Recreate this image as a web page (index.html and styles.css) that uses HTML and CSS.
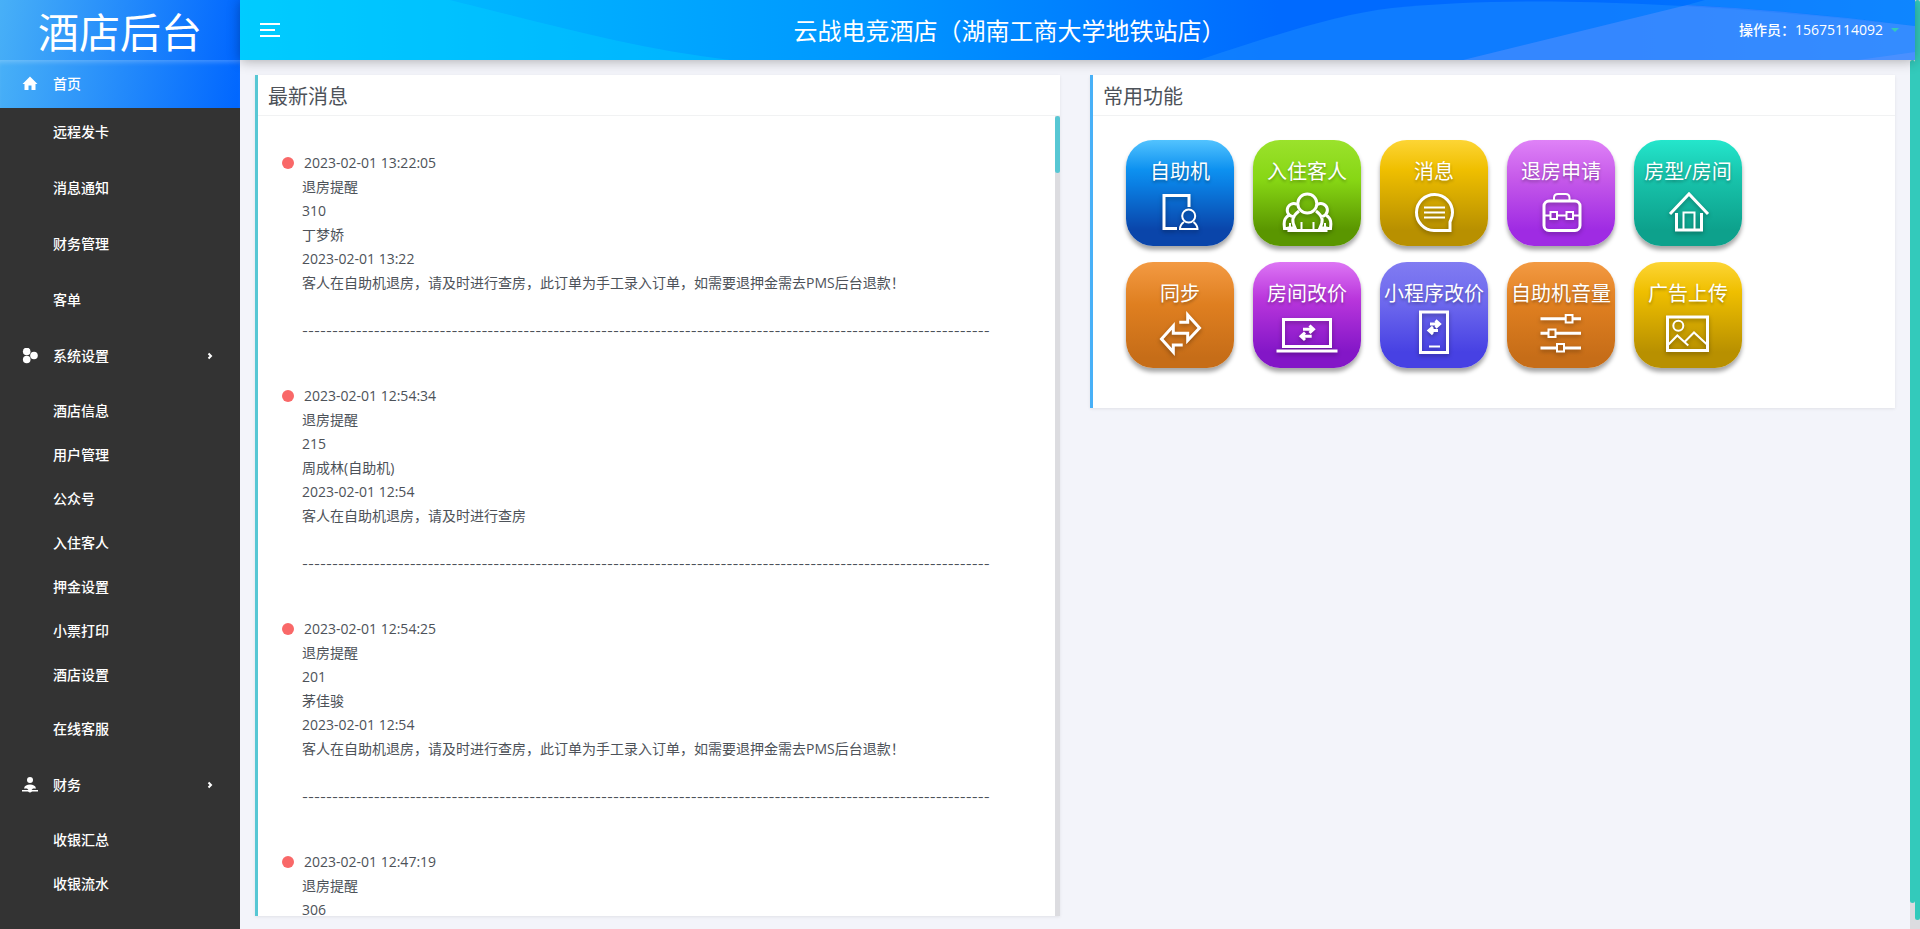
FILE: index.html
```html
<!DOCTYPE html>
<html lang="zh-CN">
<head>
<meta charset="utf-8">
<title>酒店后台</title>
<link rel="stylesheet" href="styles.css">
</head>
<body>
<div class="app">
  <aside class="sidebar">
    <div class="logo">酒店后台</div>
    <nav>
      <ul class="menu">
        <li class="home"><a href="#"><svg class="menu-icon" viewBox="0 0 16 16"><path d="M8 0.500L0.500 8H2.500V14H6.500V9.500H9.500V14H13.500V8H15.500Z"/></svg>首页</a></li>
        <li><a href="#">远程发卡</a></li>
        <li><a href="#">消息通知</a></li>
        <li><a href="#">财务管理</a></li>
        <li><a href="#">客单</a></li>
        <li><a href="#"><svg class="menu-icon" viewBox="0 0 16 16"><circle cx="4.700" cy="3.500" r="3.800"/><circle cx="4.700" cy="11.500" r="3.800"/><circle cx="12" cy="7.500" r="3.800"/></svg>系统设置<svg class="chevron" viewBox="0 0 6 8"><path d="M1.500 1.500L4 4L1.500 6.500"/></svg></a>
          <ul class="submenu">
            <li><a href="#">酒店信息</a></li>
            <li><a href="#">用户管理</a></li>
            <li><a href="#">公众号</a></li>
            <li><a href="#">入住客人</a></li>
            <li><a href="#">押金设置</a></li>
            <li><a href="#">小票打印</a></li>
            <li><a href="#">酒店设置</a></li>
          </ul>
        </li>
        <li><a href="#">在线客服</a></li>
        <li><a href="#"><svg class="menu-icon" viewBox="0 0 16 16"><circle cx="8" cy="3" r="3"/><path d="M2 11.500C2.500 8.500 5 7.500 8 7.500S13.500 8.500 14 11.500H11L9.500 13H16V14.500H10Q8 16.500 6 14.500H0V13H6.500L5 11.500Z"/></svg>财务<svg class="chevron" viewBox="0 0 6 8"><path d="M1.500 1.500L4 4L1.500 6.500"/></svg></a>
          <ul class="submenu">
            <li><a href="#">收银汇总</a></li>
            <li><a href="#">收银流水</a></li>
          </ul>
        </li>
      </ul>
    </nav>
  </aside>

  <div class="page">
    <header class="topbar">
      <svg class="waves" viewBox="0 0 1675 60" preserveAspectRatio="none">
        <path class="wave-left" d="M0 0H210C300 22 390 48 490 60H0Z"/>
        <path class="wave-low" d="M959 60C1040 33 1100 14 1152 8C1290 -5 1450 2 1675 26V60Z"/>
        <path class="wave-low" d="M1465 0H1675V26C1600 16 1520 9 1447 5Z"/>
        <path class="wave-high" d="M1223 60L1447 5Q1560 11 1675 26V60Z"/>
        <path class="wave-high" d="M1618 60L1675 52V60Z"/>
      </svg>
      <button class="toggle" type="button" aria-label="菜单"><span></span><span class="short"></span><span></span></button>
      <h1>云战电竞酒店（湖南工商大学地铁站店）</h1>
      <button class="user" type="button">操作员：15675114092<span class="caret"></span></button>
    </header>

    <div class="content">
      <main class="panels">
        <section class="panel messages">
          <h2>最新消息</h2>
          <div class="feed">
            <ul class="feed-list">
              <li>
                <h3>2023-02-01 13:22:05</h3>
                <p>退房提醒</p><p>310</p><p>丁梦娇</p><p>2023-02-01 13:22</p>
                <p>客人在自助机退房，请及时进行查房，此订单为手工录入订单，如需要退押金需去PMS后台退款！</p>
                <p class="rule">-------------------------------------------------------------------------------------------------------------------</p>
              </li>
              <li>
                <h3>2023-02-01 12:54:34</h3>
                <p>退房提醒</p><p>215</p><p>周成林(自助机)</p><p>2023-02-01 12:54</p>
                <p>客人在自助机退房，请及时进行查房</p>
                <p class="rule">-------------------------------------------------------------------------------------------------------------------</p>
              </li>
              <li>
                <h3>2023-02-01 12:54:25</h3>
                <p>退房提醒</p><p>201</p><p>茅佳骏</p><p>2023-02-01 12:54</p>
                <p>客人在自助机退房，请及时进行查房，此订单为手工录入订单，如需要退押金需去PMS后台退款！</p>
                <p class="rule">-------------------------------------------------------------------------------------------------------------------</p>
              </li>
              <li>
                <h3>2023-02-01 12:47:19</h3>
                <p>退房提醒</p><p>306</p>
              </li>
            </ul>
            <div class="track"><div class="thumb"></div></div>
          </div>
        </section>

        <section class="panel shortcuts">
          <h2>常用功能</h2>
          <div class="tiles">
            <a class="tile blue" href="#">自助机
              <svg viewBox="0 0 108 50"><path d="M51 38.500H38V5.500H63V17"/><g class="thin"><circle cx="62.700" cy="26" r="6.500"/><path d="M58 32C55 34 54 36 54 39H71.500C71.500 36 70 34 67.500 32"/></g></svg></a>
            <a class="tile green" href="#">入住客人
              <svg viewBox="0 0 108 50"><circle cx="54.300" cy="13.500" r="9.500"/><path d="M44 14.500A6.500 6.500 0 1 0 42 26.500M64.500 14.500A6.500 6.500 0 1 1 67 26.500M46 21C38 27 39 32 42 38L36 38V40.500H73V38H67C70 32 71 27 63 21M36 25C30 29 31 34 31.500 38.500H36M73 25C79 29 78 34 77.500 38.500H73"/><path class="thin" d="M48.500 32V40M60.500 32V40M37 33V39M72 33V39"/></svg></a>
            <a class="tile yellow" href="#">消息
              <svg viewBox="0 0 108 50"><path d="M70 40.500H54A18 18 0 1 1 72.500 22.500C72.500 27 71 29 70 32Z"/><path class="thin" d="M44 17.500H65M44 22.500H65M44 27.500H65"/></svg></a>
            <a class="tile violet" href="#">退房申请
              <svg viewBox="0 0 108 50"><rect x="37" y="11" width="36" height="29.500" rx="5"/><path class="thin" d="M47 10V8Q47 4 51 4H58.500Q62.500 4 62.500 8V10M37 25.500H43M50.500 25.500H59M66.500 25.500H73"/><path class="thin" d="M43.500 22H50V29H43.500ZM59.500 22H66V29H59.500Z"/></svg></a>
            <a class="tile teal" href="#">房型/房间
              <svg viewBox="0 0 108 50"><path d="M36 24L55 4L74 24M42.500 23V40H67.500V23"/><path class="thin" d="M49.500 40V22.500H60.500V40"/></svg></a>
            <a class="tile orange" href="#">同步
              <svg viewBox="0 0 108 50"><path d="M53.300 10.300H61.700V3L73.500 16L61.700 28.500V21.300H47.300V14L35.500 27L47.300 40V33H56.700"/></svg></a>
            <a class="tile purple" href="#">房间改价
              <svg viewBox="0 0 108 50"><path d="M30.500 7.500H77.500V34.500H30.500ZM23.500 39H84.500"/><path class="arrows" d="M50 17.300H60M56.500 13.500L60.500 17.300L56.500 21M58.700 24.300H48.500M52 20.500L48 24.300L52 28"/></svg></a>
            <a class="tile indigo" href="#">小程序改价
              <svg viewBox="0 0 108 50"><path d="M40.500 0H67.500V40.500H40.500Z"/><path class="arrows" d="M50 12H59M55.500 8.500L59.500 12L55.500 15.500M58 18.500H49.500M53 15L49 18.500L53 22"/><path class="thin" d="M49 34.500H60"/></svg></a>
            <a class="tile orange" href="#">自助机音量
              <svg viewBox="0 0 108 50"><path d="M33.500 6.700H58M66 6.700H74M33.500 21.300H41M49 21.300H74M33.500 36H49.500M57.500 36H74"/><path class="thin" d="M58.700 3H65.500V10.500H58.700ZM41.500 17.500H48.500V25H41.500ZM50 32H57V39.500H50Z"/></svg></a>
            <a class="tile yellow" href="#">广告上传
              <svg viewBox="0 0 108 50"><path d="M33.500 5H73.500V38.500H33.500Z"/><g class="thin"><circle cx="44.300" cy="13.700" r="5"/><path d="M34.500 32.500L43.300 23.500L54.300 33.500M51 29.500L60 20.500L73 32.500"/></g></svg></a>
          </div>
        </section>
      </main>
      <div class="page-track"><div class="thumb"></div></div>
    </div>
  </div>
  <div class="window-track"><div class="thumb"></div></div>
</div>
</body>
</html>
```
FILE: styles.css
```css
* { box-sizing: border-box; }

body {
  margin: 0;
  color: #4d5259;
  font: 14px/24px "Open Sans", "Noto Sans CJK SC", sans-serif;
  background: #f3f4fa;
}

ul { margin: 0; padding: 0; list-style: none; }
h1, h2, h3, p { margin: 0; font-weight: 400; }
a { color: inherit; text-decoration: none; }
button { padding: 0; border: 0; color: inherit; font: inherit; background: none; }

.app { display: flex; height: 100vh; overflow: hidden; }

/* Sidebar */
.sidebar {
  flex: 0 0 240px;
  overflow: hidden;
  color: #fff;
  background: #333;
}
.logo {
  height: 60px;
  font-size: 41px;
  line-height: 64px;
  text-align: center;
  background: linear-gradient(100deg, #48b0f7, #06f);
}
.menu { display: flex; flex-direction: column; gap: 8px; }
.menu a {
  position: relative;
  display: flex;
  align-items: center;
  height: 48px;
  padding-left: 53px;
  font-weight: 500;
}
.menu .home { margin-bottom: -8px; }
.home a {
  background: linear-gradient(100deg, #48b0f7, #06f);
  box-shadow: inset 0 5px 5px -3px rgba(255, 255, 255, .25);
}
.menu-icon {
  position: absolute;
  left: 22px;
  width: 16px;
  height: 16px;
  fill: #fff;
}
.chevron {
  width: 6px;
  height: 8px;
  margin: 0 27px 0 auto;
  fill: none;
  stroke: #fff;
  stroke-width: 2;
}
.submenu { padding: 9px 0 0; }
.submenu a { height: 44px; }

/* Top bar */
.page { display: flex; flex: 1; flex-direction: column; min-width: 0; }
.topbar {
  position: relative;
  z-index: 1;
  display: flex;
  flex: 0 0 60px;
  align-items: center;
  justify-content: space-between;
  padding: 0 16px 0 20px;
  color: #fff;
  background: linear-gradient(90deg, #00c8ff, #0096ff 38%, #006aff 62%, #006aff 80%, #0080ff);
  box-shadow: 0 1px 12px rgba(0, 0, 0, .3);
}
.waves { position: absolute; inset: 0; width: 100%; height: 100%; }
.wave-left { fill: #00d4ff; fill-opacity: .35; }
.wave-low { fill: #1a8aff; fill-opacity: .55; }
.wave-high { fill: #6a95ff; fill-opacity: .42; }
.toggle {
  position: relative;
  display: flex;
  flex-direction: column;
  gap: 4px;
  width: 20px;
}
.toggle span { width: 20px; height: 2px; background: #fff; }
.toggle .short { width: 15px; }
.topbar h1 { position: relative; padding-top: 2px; font-size: 24px; line-height: 32px; }
.user { position: relative; display: flex; align-items: center; gap: 8px; font-weight: 500; }
.caret { border: 4px solid transparent; border-top-color: #33cabb; border-bottom: 0; }

/* Content */
.content { display: flex; flex: 1; min-height: 0; }
.panels {
  display: grid;
  flex: 1;
  grid-template-columns: 1fr 1fr;
  grid-template-rows: minmax(0, 1fr);
  gap: 30px;
  align-items: start;
  min-width: 0;
  padding: 15px 15px 13px;
}
.panel {
  min-width: 0;
  border-left: 3px solid #57c7d4;
  background: #fff;
  box-shadow: 0 1px 3px rgba(0, 0, 0, .08);
}
.messages { display: flex; flex-direction: column; height: 100%; }
.shortcuts { border-color: #48b0f7; }
.panel h2 {
  padding: 6px 10px 2px;
  border-bottom: 1px solid #f1f2f3;
  font-size: 20px;
  line-height: 32px;
}
.feed { display: flex; flex: 1; min-height: 0; overflow: hidden; }
.feed-list {
  display: flex;
  flex: 1;
  flex-direction: column;
  gap: 41px;
  min-width: 0;
  padding: 35px 24px 0;
}
.feed-list li { padding-left: 20px; }
.feed-list h3 {
  display: flex;
  align-items: center;
  gap: 10px;
  margin-left: -20px;
  font-size: 14px;
}
.feed-list h3::before {
  width: 12px;
  height: 12px;
  border-radius: 50%;
  background: #f96868;
  content: "";
}
.feed-list p { white-space: nowrap; }
.feed-list .rule { margin-top: 24px; font-family: Inter, sans-serif; font-size: 13px; }

/* Scroll tracks */
.track, .page-track, .window-track { flex: 0 0 5px; background: #dcdce0; }
.thumb { border-radius: 3px; background: #33cabb; }
.track .thumb { height: 57px; background: #57c7d4; }
.page-track .thumb { height: 97%; }
.window-track .thumb { height: 99%; }

/* Shortcut tiles */
.tiles { display: flex; flex-wrap: wrap; gap: 16px 19px; padding: 24px 33px 40px; }
.tile {
  display: flex;
  flex-direction: column;
  align-items: center;
  width: 108px;
  height: 106px;
  padding-top: 18px;
  border-radius: 27px;
  color: #fff;
  font-size: 20px;
  line-height: 28px;
  white-space: nowrap;
  text-shadow: 0 2px 3px rgba(0, 0, 0, .3);
  box-shadow: 0 4px 4px rgba(0, 0, 0, .35);
}
.tile svg {
  width: 108px;
  height: 50px;
  margin-top: 4px;
  overflow: visible;
  fill: none;
  stroke: #fff;
  stroke-width: 3;
  filter: drop-shadow(0 2px 2px rgba(0, 0, 0, .3));
}
.tile .thin { stroke-width: 2; }
.blue { background: linear-gradient(#52c3ff, #0d91f0 28%, #0a7fe3 42%, #0a45aa 85%); }
.green { background: linear-gradient(#9be22c, #87d614 38%, #5a9600 85%); }
.yellow { background: linear-gradient(#fdd535, #efbf00 28%, #b89000 85%); }
.violet { background: linear-gradient(#df82f7, #c75bea 35%, #9f2be3 85%); }
.teal { background: linear-gradient(#24e6cc, #18c4ac 35%, #0da18c 85%); }
.orange { background: linear-gradient(#f39a43, #df7f20 40%, #c66d18 90%); }
.purple { background: linear-gradient(#dd76f4, #b936dc 35%, #8316c7 85%); }
.indigo { background: linear-gradient(#817cf2, #6c67ed 40%, #4741e3 85%); }
```
